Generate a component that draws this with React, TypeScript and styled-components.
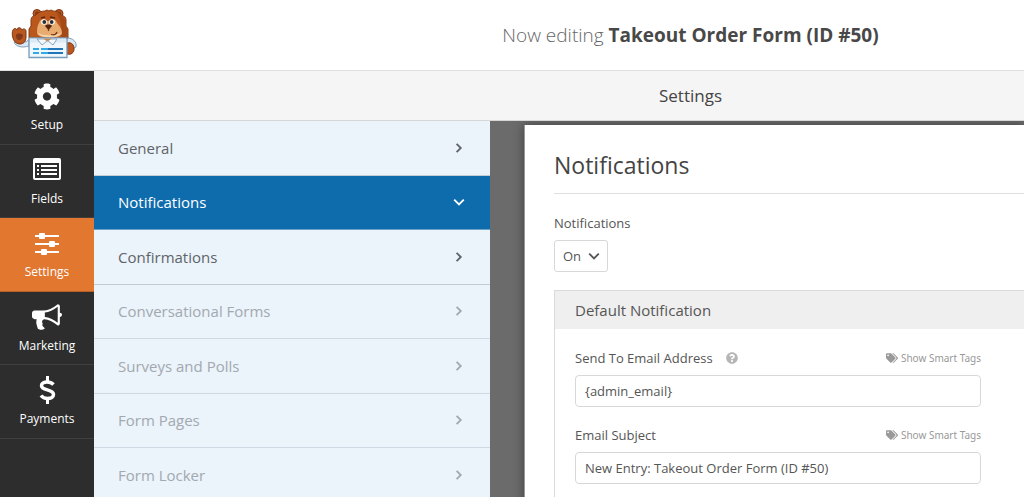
import React from "react";
import styled, { createGlobalStyle, css } from "styled-components";
import { FaCog, FaQuestionCircle, FaTags } from "react-icons/fa";

const GlobalStyle = createGlobalStyle`
  *, *::before, *::after { box-sizing: border-box; }
  body {
    margin: 0;
    background: #fff;
    color: #555;
    font-family: "Open Sans", "Noto Sans", sans-serif;
    font-size: 13px;
  }
  button, input, select { font: inherit; color: inherit; }
`;

const Shell = styled.div`
  display: flex;
  flex-direction: column;
  height: 100vh;
  overflow: hidden;
`;

const Header = styled.header`
  display: flex;
  flex: none;
  align-items: center;
  height: 71px;
  border-bottom: 1px solid #dfdfdf;
`;

const LogoSlot = styled.div`
  flex: none;
  width: 357px;
  height: 70px;
`;

const FormTitle = styled.h1`
  flex: 1;
  margin: 0;
  text-align: center;
  font-size: 19px;
  line-height: 28px;
  font-weight: 300;
  color: #666;
  white-space: nowrap;

  strong {
    font-weight: 700;
    color: #484848;
  }
`;

const Body = styled.div`
  display: flex;
  flex: 1;
  min-height: 0;
`;

const MainNav = styled.nav`
  display: grid;
  flex: none;
  grid-auto-rows: 74px 73px;
  width: 94px;
  background: #2d2d2d;
`;

const NavButton = styled.button<{ $active?: boolean }>`
  display: flex;
  flex-direction: column;
  align-items: center;
  gap: 3px;
  padding: 11px 0 0;
  border: 0;
  border-bottom: 1px solid ${(p) => (p.$active ? "#b9602a" : "#3f3f3f")};
  background: ${(p) => (p.$active ? "#e27730" : "transparent")};
  color: #fff;
  font-size: 12px;
  line-height: 20px;
  cursor: pointer;

  svg {
    flex: none;
  }
`;

const Workspace = styled.div`
  display: flex;
  flex: 1;
  flex-direction: column;
  min-width: 0;
`;

const SectionBar = styled.div`
  flex: none;
  height: 50px;
  padding-left: 263px;
  border-bottom: 1px solid #d6d6d6;
  background: #f5f5f5;
  color: #444;
  font-size: 17px;
  line-height: 50px;
  text-align: center;
`;

const Columns = styled.div`
  display: flex;
  flex: 1;
  min-height: 0;
`;

const SettingsList = styled.nav`
  display: grid;
  flex: none;
  grid-auto-rows: 55px 54px;
  width: 396px;
  overflow: hidden;
  background: #ebf3fb;
`;

const SettingsLink = styled.a<{ $state: "normal" | "active" | "muted" }>`
  display: flex;
  align-items: center;
  justify-content: space-between;
  padding: 0 25px 1px 24px;
  border-bottom: 1px solid #c3cdd6;
  color: #5f6468;
  font-size: 15px;
  line-height: 24px;
  text-decoration: none;

  ${(p) =>
    p.$state === "active" &&
    css`
      background: #0e6cad;
      border-color: #6ba1ca;
      color: #fff;
      font-weight: 500;
    `}
  ${(p) =>
    p.$state === "muted" &&
    css`
      color: #a2a9af;
      border-color: #ced9e3;
    `}
`;

const Preview = styled.main`
  flex: 1;
  min-width: 0;
  padding: 4px 0 0 34px;
  overflow: hidden;
  background: #6b6b6b;
`;

const Card = styled.section`
  min-height: 100%;
  padding: 24px 0 0 29px;
  border-left: 1px solid #999;
  background: #fff;
  box-shadow: 0 0 10px rgba(0, 0, 0, 0.4);
`;

const CardTitle = styled.h2`
  margin: 0 0 19px;
  padding-bottom: 12px;
  border-bottom: 1px solid #dfdfdf;
  color: #444;
  font-size: 23px;
  font-weight: 400;
  line-height: 32px;
`;

const FieldLabel = styled.label`
  display: block;
  font-size: 13px;
  line-height: 20px;
`;

const SelectWrap = styled.div`
  position: relative;
  width: 54px;
  margin: 7px 0 18px;

  svg {
    position: absolute;
    top: 10px;
    right: 8px;
    pointer-events: none;
  }
`;

const Select = styled.select`
  display: block;
  width: 100%;
  height: 32px;
  padding: 0 0 0 8px;
  border: 1px solid #d8d8d8;
  border-radius: 3px;
  background: #fff;
  appearance: none;
`;

const Group = styled.div`
  border: 1px solid #dadada;
  border-right: 0;
`;

const GroupTitle = styled.h3`
  margin: 0;
  padding: 0 20px;
  background: #efefef;
  color: #555;
  font-size: 15px;
  font-weight: 400;
  line-height: 38px;
`;

const GroupBody = styled.div`
  display: flex;
  flex-direction: column;
  gap: 18px;
  padding: 19px 43px 20px 20px;
`;

const FieldHead = styled.div`
  display: flex;
  align-items: center;
  margin-bottom: 7px;
`;

const HelpButton = styled.button`
  display: flex;
  margin-left: 13px;
  padding: 0;
  border: 0;
  background: none;
  color: #b5b5b5;
`;

const TagsLink = styled.a`
  display: flex;
  align-items: center;
  gap: 3px;
  margin-left: auto;
  color: #999;
  font-family: "Noto Sans", "Open Sans", sans-serif;
  font-size: 10px;
  line-height: 20px;
  text-decoration: none;
`;

const TextInput = styled.input`
  display: block;
  width: 100%;
  height: 32px;
  padding: 0 9px;
  border: 1px solid #d8d8d8;
  border-radius: 4px;
  background: #fff;
`;

const Chevron = ({ direction = "right", size = 10, color = "currentColor" }: {
  direction?: "right" | "down";
  size?: number;
  color?: string;
}) => (
  <svg width={size} height={size} viewBox="0 0 10 10" fill="none" stroke={color} strokeWidth={1.5} aria-hidden>
    <path d={direction === "right" ? "M3 1.500l3.500 3.500-3.500 3.500" : "M1 3l4 4 4-4"} />
  </svg>
);

const BearLogo = () => (
  <svg width="94" height="70" viewBox="0 0 94 70" role="img" aria-label="WPForms">
    <path d="M14 42c2 5 8 6 15 4v-7c-1 2-3 3-5 3z" fill="#dceaf5" stroke="#7f9fbd" />
    <path d="M67 38c6 0 10 4 9 9l-6 3-4-4z" fill="#dceaf5" stroke="#7f9fbd" />
    <path d="M13 30c1-2 3-2 4 0 0-3 4-3 5 0 1-2 4-1 4 1l0 6c0 5-3 7-6 7s-6-2-7-6c-1-3-1-6 0-8z" fill="#b95820" stroke="#7c3514" />
    <path d="M16 35c1-2 6-2 7 0 0 3-2 5-4 5s-3-2-3-5z" fill="#83391a" />
    <circle cx="37" cy="13.500" r="4" fill="#b95820" stroke="#7c3514" />
    <circle cx="59" cy="13.500" r="4" fill="#b95820" stroke="#7c3514" />
    <circle cx="37" cy="13.500" r="2" fill="#7f3819" />
    <circle cx="59" cy="13.500" r="2" fill="#7f3819" />
    <path d="M31 20c0-3 2-4 5-5 2-3 6-4 9-4l2-1 2 1 2-1 2 1c3 0 6 1 8 4 3 1 5 2 5 5v6l2 3v9H29v-9l2-3z" fill="#ba571d" stroke="#8a3c14" />
    <path d="M56 13c3 1 8 3 9 8l.500 6 2 3v8h-7c2-9 1-18-4.500-25z" fill="#a34a17" />
    <path d="M39 23c1-4 5-5 8-2h2c3-3 7-2 8 2 3 3 5 7 5 10 0 6-25 6-25 0 0-3 0-7 2-10z" fill="#e8ab70" />
    <path d="M38 33c5 3 18 3 23 0-1 6-21 6-23 0z" fill="#f7d2a5" />
    <circle cx="44" cy="22" r="2.800" fill="#fff" />
    <circle cx="52" cy="22" r="2.800" fill="#fff" />
    <circle cx="44.300" cy="22" r="1.900" fill="#263238" />
    <circle cx="51.700" cy="22" r="1.900" fill="#263238" />
    <path d="M41 18l4-1M50 17l5 1" stroke="#60270f" strokeWidth="1.500" />
    <path d="M45 26c1-2 6-2 7 0l-3 3.500h-1z" fill="#542513" />
    <path d="M48.500 29v2M51 34.500c3 1 5 0 6-2.500" stroke="#783415" strokeWidth="1.200" fill="none" />
    <path d="M67 43c5-1 7 2 7 6s-3 6-7 5z" fill="#bb571e" stroke="#7c3514" />
    <path d="M29 38h38v19.500H29z" fill="#eef7fc" stroke="#779bbb" strokeWidth="1.300" />
    <path d="M30 38.500h36v4H30z" fill="#dceaf6" />
    <path d="M37 39l5 6 5.500-4.500 5.500 4.500 4-6z" fill="#f4f9fd" stroke="#86a6c2" />
    <path d="M43 38.500h9l-4.500 3z" fill="#c58a55" />
    <path d="M33 49h6m2 0h7M33 53h6m2 0h7" stroke="#35a9e5" strokeWidth="2" />
    <path d="M48 49h15M48 53h15" stroke="#2176b8" strokeWidth="2" />
  </svg>
);

const FieldsIcon = () => (
  <svg width="30" height="30" viewBox="0 2 30 30" aria-hidden>
    <path fill="#fff" fillRule="evenodd" d="M3 4h24a2 2 0 0 1 2 2v18a2 2 0 0 1-2 2H3a2 2 0 0 1-2-2V6a2 2 0 0 1 2-2zM3 9v15h24V9z" />
    <path stroke="#fff" strokeWidth="2" d="M5 12h2m2 0h16M5 16h2m2 0h16M5 20h2m2 0h16" />
  </svg>
);

const SlidersIcon = () => (
  <svg width="30" height="30" viewBox="0 0 30 30" aria-hidden>
    <path stroke="#fff" strokeWidth="2" d="M3 7h24M3 15h24M3 23h24" />
    <g fill="#fff">
      <rect x="7" y="4" width="6" height="6" rx="1" />
      <rect x="17" y="12" width="6" height="6" rx="1" />
      <rect x="9" y="20" width="6" height="6" rx="1" />
    </g>
  </svg>
);

const MegaphoneIcon = () => (
  <svg width="30" height="30" viewBox="0 60 1792 1792" fill="#fff" aria-hidden>
    <path d="M1664 640q53 0 90.500 37.500t37.500 90.500-37.500 90.500-90.500 37.500v384q0 52-38 90t-90 38q-417-347-812-380-58 19-91 66t-31 100.500 40 92.500q-20 33-23 65.500t6 58 33.500 55 48 50 61.500 50.500q-29 58-111.500 83t-168.500 11.500-132-55.500q-7-23-29.500-87.500t-32-94.500-23-89-15-101 3.500-98.500 22-110.500h-122q-66 0-113-47t-47-113v-192q0-66 47-113t113-47h480q435 0 896-384 52 0 90 38t38 90v384zm-128 604v-954q-394 302-768 343v270q377 42 768 341z" />
  </svg>
);

const DollarIcon = () => (
  <svg width="30" height="30" viewBox="0 1 30 30" fill="none" stroke="#fff" aria-hidden>
    <path strokeWidth="3.500" d="M21.500 9.500C19.500 7.500 17.500 7 15 7c-3 0-5.500 1.500-5.500 3.700 0 5.300 12 3 12 8.800 0 2.500-2.500 4-6 4-2.500 0-5-1-6.500-3" />
    <path strokeWidth="3" d="M15.500 1v6M15.500 23v6" />
  </svg>
);

const mainItems = [
  { label: "Setup", icon: <FaCog size={30} viewBox="-32 -22 576 576" /> },
  { label: "Fields", icon: <FieldsIcon /> },
  { label: "Settings", icon: <SlidersIcon />, active: true },
  { label: "Marketing", icon: <MegaphoneIcon /> },
  { label: "Payments", icon: <DollarIcon /> },
];

const settingsItems: { label: string; state: "normal" | "active" | "muted" }[] = [
  { label: "General", state: "normal" },
  { label: "Notifications", state: "active" },
  { label: "Confirmations", state: "normal" },
  { label: "Conversational Forms", state: "muted" },
  { label: "Surveys and Polls", state: "muted" },
  { label: "Form Pages", state: "muted" },
  { label: "Form Locker", state: "muted" },
];

const TextField = ({ id, label, value, help }: { id: string; label: string; value: string; help?: boolean }) => (
  <div>
    <FieldHead>
      <FieldLabel htmlFor={id}>{label}</FieldLabel>
      {help && (
        <HelpButton type="button" aria-label={`Help: ${label}`}>
          <FaQuestionCircle size={12} />
        </HelpButton>
      )}
      <TagsLink href="#tags">
        <FaTags size={12} />
        Show Smart Tags
      </TagsLink>
    </FieldHead>
    <TextInput id={id} type="text" defaultValue={value} />
  </div>
);

export default function App() {
  return (
    <>
      <GlobalStyle />
      <Shell>
        <Header>
          <LogoSlot>
            <BearLogo />
          </LogoSlot>
          <FormTitle>
            Now editing <strong>Takeout Order Form (ID #50)</strong>
          </FormTitle>
        </Header>
        <Body>
          <MainNav aria-label="Builder">
            {mainItems.map((item) => (
              <NavButton key={item.label} type="button" $active={item.active}>
                {item.icon}
                {item.label}
              </NavButton>
            ))}
          </MainNav>
          <Workspace>
            <SectionBar>Settings</SectionBar>
            <Columns>
              <SettingsList aria-label="Settings">
                {settingsItems.map((item) => (
                  <SettingsLink key={item.label} href="#settings" $state={item.state}>
                    {item.label}
                    <Chevron direction={item.state === "active" ? "down" : "right"} size={12} />
                  </SettingsLink>
                ))}
              </SettingsList>
              <Preview>
                <Card>
                  <CardTitle>Notifications</CardTitle>
                  <FieldLabel htmlFor="notifications">Notifications</FieldLabel>
                  <SelectWrap>
                    <Select id="notifications" defaultValue="On">
                      <option>On</option>
                      <option>Off</option>
                    </Select>
                    <Chevron direction="down" size={12} color="#555" />
                  </SelectWrap>
                  <Group>
                    <GroupTitle>Default Notification</GroupTitle>
                    <GroupBody>
                      <TextField id="send-to" label="Send To Email Address" value="{admin_email}" help />
                      <TextField id="subject" label="Email Subject" value="New Entry: Takeout Order Form (ID #50)" />
                    </GroupBody>
                  </Group>
                </Card>
              </Preview>
            </Columns>
          </Workspace>
        </Body>
      </Shell>
    </>
  );
}
